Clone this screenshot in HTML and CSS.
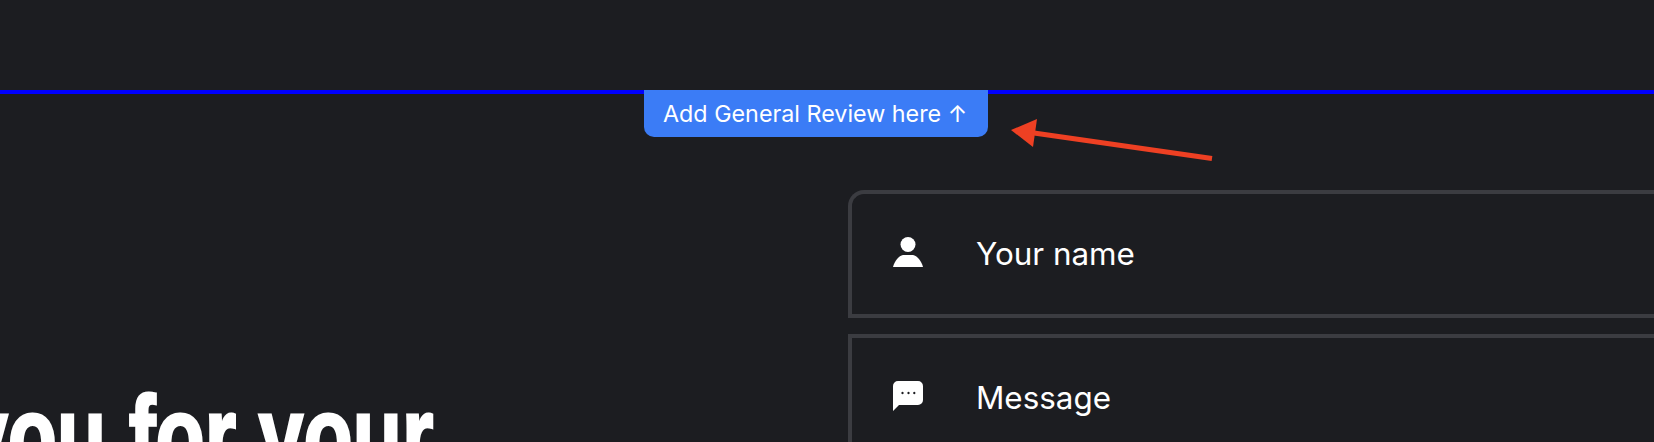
FILE: index.html
```html
<!DOCTYPE html>
<html lang="en">
<head>
<meta charset="utf-8">
<title>Add General Review</title>
<link rel="stylesheet" href="styles.css">
</head>
<body>
<div class="page">
  <div class="top-strip"></div>
  <a class="review-tab" href="#">Add General Review here ↑</a>
  <svg class="annotation" width="240" height="60" viewBox="0 0 240 60" aria-hidden="true">
    <line x1="202" y1="38.500" x2="24" y2="13" stroke="#ee4023" stroke-width="5"/>
    <polygon points="1,10 27,-1 23,27" fill="#ee4023"/>
  </svg>
  <main class="content">
    <div class="headline-col">
      <h1 class="headline">Thank you for your</h1>
    </div>
    <form class="form-col">
      <div class="field field-first">
        <svg class="field-icon" viewBox="0 0 30 30" aria-hidden="true">
          <circle cx="15" cy="7.500" r="7.500"/>
          <path d="M0 30C1.500 24 6 18.500 10 18H20C24 18.500 28.500 24 30 30Z"/>
        </svg>
        <span class="field-label">Your name</span>
      </div>
      <div class="field field-second">
        <svg class="field-icon" viewBox="0 0 30 30" aria-hidden="true">
          <path fill-rule="evenodd" d="M5 0H25A5 5 0 0 1 30 5V19A5 5 0 0 1 25 24H6L0 30V5A5 5 0 0 1 5 0ZM9.500 10.800a1.200 1.200 0 1 0 .01 0ZM15.500 10.800a1.200 1.200 0 1 0 .01 0ZM21.300 10.800a1.200 1.200 0 1 0 .01 0Z"/>
        </svg>
        <span class="field-label">Message</span>
      </div>
    </form>
  </main>
</div>
</body>
</html>
```

FILE: styles.css
```css
* { box-sizing: border-box; }
html, body { margin: 0; height: 100%; }
body {
  background: #1c1d21;
  color: #fff;
  font-family: Inter, "Liberation Sans", sans-serif;
  overflow: hidden;
}
.page { position: relative; width: 1654px; height: 442px; overflow: hidden; }
.top-strip { height: 94px; border-bottom: 4px solid #0000ff; }
.review-tab {
  position: absolute;
  left: 644px;
  top: 90px;
  width: 344px;
  height: 47px;
  padding-left: 19px;
  display: flex;
  align-items: center;
  background: #3b7cf6;
  color: #fff;
  border-radius: 0 0 10px 10px;
  font-size: 23.300px;
  text-decoration: none;
  white-space: nowrap;
}
.annotation { position: absolute; left: 1010px; top: 120px; overflow: visible; }
.content { display: flex; padding-top: 96px; }
.headline-col {
  width: 433px;
  flex: none;
  margin-right: 415px;
  display: flex;
  justify-content: flex-end;
  height: 252px;
  align-items: flex-end;
}
.headline {
  margin: 0 0 -50px;
  flex: none;
  white-space: nowrap;
  font-family: "Liberation Sans", sans-serif;
  font-weight: 700;
  font-size: 112px;
  line-height: 1;
  -webkit-text-stroke: 3px #fff;
  transform: scaleX(0.72);
  transform-origin: right center;
}
.form-col { flex: 1; display: flex; flex-direction: column; gap: 16px; }
.field {
  display: flex;
  align-items: center;
  border: 4px solid #3b3c41;
  border-right: 0;
  padding-left: 41px;
}
.field-first { height: 128px; border-top-left-radius: 16px; }
.field-second { height: 128px; }
.field-icon { width: 30px; height: 30px; fill: #fff; flex: none; margin: 0 53px 4px 0; }
.field-label { font-size: 31.400px; margin-bottom: 1px; }
```
